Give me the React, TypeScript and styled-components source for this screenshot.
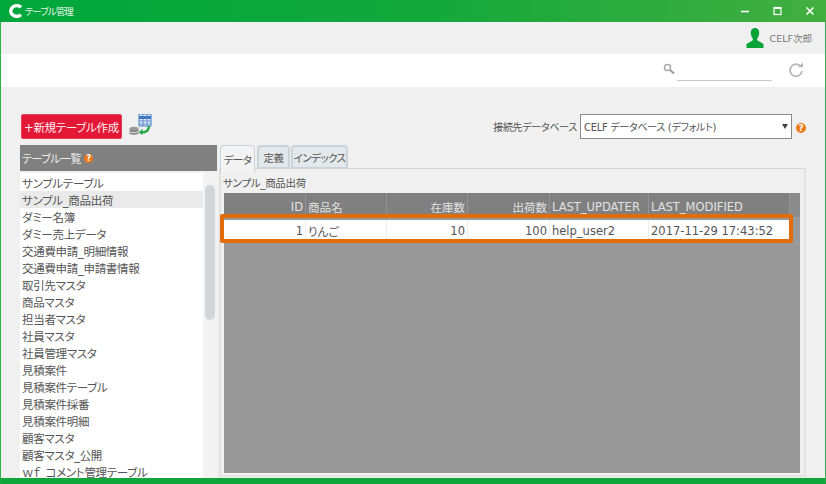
import styled, { createGlobalStyle } from "styled-components";

const GlobalStyle = createGlobalStyle`
  html, body { margin: 0; padding: 0; background: #f0f0f0; }
  body { font-family: "DejaVu Sans", "Noto Sans CJK JP", sans-serif; font-feature-settings: "palt"; }
`;

const tables = [
  "サンプルテーブル",
  "サンプル_商品出荷",
  "ダミー名簿",
  "ダミー売上データ",
  "交通費申請_明細情報",
  "交通費申請_申請書情報",
  "取引先マスタ",
  "商品マスタ",
  "担当者マスタ",
  "社員マスタ",
  "社員管理マスタ",
  "見積案件",
  "見積案件テーブル",
  "見積案件採番",
  "見積案件明細",
  "顧客マスタ",
  "顧客マスタ_公開",
  "ｗｆ_コメント管理テーブル",
];

const columns = [
  { name: "ID", width: 82, right: true, value: "1" },
  { name: "商品名", width: 81, right: false, value: "りんご" },
  { name: "在庫数", width: 81, right: true, value: "10" },
  { name: "出荷数", width: 82, right: true, value: "100" },
  { name: "LAST_UPDATER", width: 99, right: false, value: "help_user2" },
  { name: "LAST_MODIFIED", width: 141, right: false, value: "2017-11-29 17:43:52" },
];

const HelpIcon = ({ size = 10 }: { size?: number }) => (
  <HelpMark $size={size}>?</HelpMark>
);

export default function App() {
  return (
    <Window>
      <GlobalStyle />
      <TitleBar>
        <svg width="15" height="14" viewBox="0 0 15 14">
          <path d="M13 3.2 A6 5.4 0 1 0 13 10.8" fill="none" stroke="#fff" strokeWidth="3.4" />
        </svg>
        <TitleText>テーブル管理</TitleText>
        <WindowButtons>
          <svg width="12" height="12" viewBox="0 0 12 12">
            <path d="M1 6.5H9" stroke="#fff" strokeWidth="1.6" />
          </svg>
          <svg width="12" height="12" viewBox="0 0 12 12">
            <rect x="2" y="2.5" width="7" height="7" fill="none" stroke="#fff" strokeWidth="1.2" />
            <path d="M2 3H9" stroke="#fff" strokeWidth="2" />
          </svg>
          <svg width="12" height="12" viewBox="0 0 12 12">
            <path d="M2.5 2.5 9.5 9.5M9.5 2.5 2.5 9.5" stroke="#fff" strokeWidth="1.6" />
          </svg>
        </WindowButtons>
      </TitleBar>

      <Body>
        <UserBar>
          <svg width="18" height="20" viewBox="0 0 18 20">
            <path
              d="M9 0C6 0 4.600 2.300 4.800 5.200 5 8 6 9.500 6.800 10.500V12.300L.5 16V20H17.500V16L11.200 12.300V10.500C12 9.500 13 8 13.200 5.200 13.400 2.300 12 0 9 0Z"
              fill="#0aa33a"
            />
          </svg>
          <UserName>CELF次郎</UserName>
        </UserBar>

        <SearchBar>
          <svg width="12" height="12" viewBox="0 0 12 12">
            <circle cx="4.500" cy="4.500" r="3" fill="none" stroke="#aaa" strokeWidth="1.500" />
            <path d="M7 7 11 10.500" stroke="#999" strokeWidth="2" />
          </svg>
          <SearchInput />
          <svg width="16" height="16" viewBox="0 0 16 16">
            <path d="M12.800 4.500A6 6 0 1 0 14 9" fill="none" stroke="#b5b5b5" strokeWidth="1.700" />
            <path d="M10 5.200H15V.5Z" fill="#b5b5b5" />
          </svg>
        </SearchBar>

        <Workspace>
          <ActionRow>
            <CreateButton>+新規テーブル作成</CreateButton>
            <svg width="24" height="22" viewBox="0 0 24 22">
              <rect x="10" y="0" width="12" height="12" fill="#dfe9f7" stroke="#4a7fc4" />
              <path d="M10 3.500H22" stroke="#3d78c6" strokeWidth="3" />
              <path d="M14 0V12M18 0V12M10 7H22M10 10H22" stroke="#4a7fc4" strokeWidth=".8" />
              <ellipse cx="5" cy="15" rx="4.500" ry="2.200" fill="#9a9a9a" />
              <path d="M.5 15V19.500C.5 21 9.500 21 9.500 19.500V15C9.500 17 .5 17 .5 15Z" fill="#7f7f7f" />
              <path d="M.5 17.500C1.500 19 8.500 19 9.500 17.500" stroke="#eee" fill="none" />
              <path d="M20 12C20 17 17 18.500 12 18.500" fill="none" stroke="#27a844" strokeWidth="2.400" />
              <path d="M13.500 14.500 9.500 18.500 13.500 21Z" fill="#27a844" />
            </svg>
            <ConnectionLabel>接続先データベース</ConnectionLabel>
            <DbSelect>
              <span>CELF データベース (デフォルト)</span>
              <SelectArrow />
            </DbSelect>
            <HelpIcon />
          </ActionRow>

          <Panels>
            <ListColumn>
              <ListHeader>
                テーブル一覧
                <HelpIcon size={9} />
              </ListHeader>
              <ListFrame>
                <TableList>
                  {tables.map((name, i) => (
                    <TableItem key={name} $selected={i === 1}>
                      {name}
                    </TableItem>
                  ))}
                </TableList>
                <ScrollTrack>
                  <ScrollThumb />
                </ScrollTrack>
              </ListFrame>
            </ListColumn>

            <DetailColumn>
              <Tabs>
                <Tab $active $width={35}>データ</Tab>
                <Tab $width={33}>定義</Tab>
                <Tab $width={57}>インデックス</Tab>
              </Tabs>
              <TabPanel>
                <TableTitle>サンプル_商品出荷</TableTitle>
                <GridArea>
                  <GridHeader>
                    {columns.map((c) => (
                      <HeaderCell key={c.name} $width={c.width} $right={c.right}>
                        {c.name}
                      </HeaderCell>
                    ))}
                    <HeaderFiller />
                  </GridHeader>
                  <GridRow>
                    {columns.map((c) => (
                      <RowCell key={c.name} $width={c.width} $right={c.right}>
                        {c.value}
                      </RowCell>
                    ))}
                  </GridRow>
                  <Highlight />
                </GridArea>
              </TabPanel>
            </DetailColumn>
          </Panels>
        </Workspace>
      </Body>
    </Window>
  );
}

const Window = styled.div`
  width: 826px;
  height: 484px;
  display: flex;
  flex-direction: column;
  overflow: hidden;
  background: #f0f0f0;
  color: #555;
  font-size: 11.5px;
`;
const TitleBar = styled.div`
  height: 22px;
  flex: none;
  display: flex;
  align-items: center;
  padding: 0 0 0 8px;
  background: linear-gradient(90deg, #00a73c 0%, #12a83c 50%, #43ae40 100%);
  box-sizing: border-box;
`;
const TitleText = styled.span`
  margin-left: 2px;
  color: #e6f5e6;
  font-size: 9.5px;
  letter-spacing: -1px;
`;
const WindowButtons = styled.div`
  margin-left: auto;
  width: 85px;
  display: flex;
  gap: 20px;
  margin-right: 1px;
  svg { flex: none; }
`;
const Body = styled.div`
  flex: 1;
  display: flex;
  flex-direction: column;
  min-height: 0;
  border-left: 1px solid #2bb24c;
  border-right: 1px solid #2bb24c;
  border-bottom: 6px solid #0fa63c;
`;
const UserBar = styled.div`
  height: 32px;
  flex: none;
  display: flex;
  align-items: center;
  justify-content: flex-end;
  gap: 6px;
  padding-right: 13px;
  background: #f0f0f0;
  box-sizing: border-box;
`;
const UserName = styled.span`
  font-size: 9.5px;
  color: #777;
`;
const SearchBar = styled.div`
  height: 33px;
  flex: none;
  display: flex;
  align-items: center;
  justify-content: flex-end;
  padding-right: 21px;
  background: #fff;
  box-sizing: border-box;
  svg:last-child { margin-left: 16px; margin-top: -2px; }
  svg:first-child { margin-right: 0; margin-top: -4px; }
`;
const SearchInput = styled.div`
  width: 95px;
  height: 19px;
  margin-left: 2px;
  border-bottom: 1px solid #c8c8c8;
`;
const Workspace = styled.div`
  flex: 1;
  min-height: 0;
  display: flex;
  flex-direction: column;
  padding: 27px 19px 0 19px;
  background: #f0f0f0;
`;
const ActionRow = styled.div`
  height: 25px;
  flex: none;
  display: flex;
  align-items: center;
  margin-left: 1px;
  svg { margin-left: 7px; margin-top: -3px; }
  > span:last-child { margin-top: 3px; }
`;
const CreateButton = styled.button`
  width: 101px;
  height: 25px;
  padding: 0;
  border: 1px solid #e5405a;
  border-radius: 2px;
  background: #e31837;
  color: #fdeef0;
  font: inherit;
  font-size: 11.5px;
  letter-spacing: -0.3px;
  white-space: nowrap;
`;
const ConnectionLabel = styled.span`
  margin-left: auto;
  font-size: 10px;
  letter-spacing: -0.3px;
  margin-right: 3px;
  color: #555;
`;
const DbSelect = styled.div`
  width: 212px;
  height: 25px;
  margin-right: 1px;
  padding-left: 3px;
  display: flex;
  align-items: center;
  justify-content: space-between;
  box-sizing: border-box;
  border: 1px solid #8a8a8a;
  background: #fff;
  font-size: 10px;
  letter-spacing: -0.3px;
  color: #555;
`;
const SelectArrow = styled.i`
  margin: 0 3px 0 0;
  border-left: 3px solid transparent;
  border-right: 3px solid transparent;
  border-top: 5px solid #444;
`;
const HelpMark = styled.span<{ $size: number }>`
  width: ${(p) => p.$size}px;
  height: ${(p) => p.$size}px;
  margin-left: 3px;
  display: inline-flex;
  align-items: center;
  justify-content: center;
  flex: none;
  border-radius: 50%;
  background: #ee7a1c;
  color: #fff;
  font-size: ${(p) => p.$size - 1}px;
  font-weight: bold;
`;
const Panels = styled.div`
  flex: 1;
  min-height: 0;
  display: flex;
  margin-top: 6px;
`;
const ListColumn = styled.div`
  width: 197px;
  flex: none;
  display: flex;
  flex-direction: column;
`;
const ListHeader = styled.div`
  height: 26px;
  flex: none;
  display: flex;
  align-items: center;
  padding-left: 2px;
  background: #808080;
  color: #eee;
  font-size: 11px;
  letter-spacing: -0.5px;
`;
const ListFrame = styled.div`
  flex: 1;
  min-height: 0;
  margin-top: 2px;
  display: flex;
  overflow: hidden;
  background: #fff;
`;
const TableList = styled.div`
  width: 183px;
  flex: none;
  padding-top: 1px;
`;
const TableItem = styled.div<{ $selected?: boolean }>`
  height: 17px;
  line-height: 21px;
  padding-left: 2px;
  white-space: nowrap;
  font-size: 11.5px;
  letter-spacing: -0.3px;
  background: ${(p) => (p.$selected ? "#eaeaea" : "transparent")};
  color: #555;
`;
const ScrollTrack = styled.div`
  width: 14px;
  flex: none;
  background: #f3f3f3;
  padding: 12px 2px 0;
  box-sizing: border-box;
`;
const ScrollThumb = styled.div`
  height: 135px;
  border-radius: 5px;
  background: #d3d6d9;
`;
const DetailColumn = styled.div`
  flex: 1;
  min-width: 0;
  display: flex;
  flex-direction: column;
  margin-left: 2px;
`;
const Tabs = styled.div`
  height: 23px;
  flex: none;
  display: flex;
  align-items: flex-start;
  gap: 1px;
  padding-left: 1px;
`;
const Tab = styled.div<{ $active?: boolean; $width: number }>`
  width: ${(p) => p.$width}px;
  height: ${(p) => (p.$active ? 27 : 23)}px;
  margin-right: ${(p) => (p.$active ? 1 : 0)}px;
  display: flex;
  align-items: center;
  justify-content: center;
  position: relative;
  z-index: ${(p) => (p.$active ? 1 : 0)};
  box-sizing: border-box;
  border: ${(p) => (p.$active ? "1px" : "2px")} solid #c9d3d8;
  border-bottom: ${(p) => (p.$active ? "none" : "1px solid #c9d3d8")};
  border-radius: 4px 4px 0 0;
  background: ${(p) => (p.$active ? "#f3f3f3" : "#e2e8eb")};
  font-size: 10.5px;
  letter-spacing: -0.6px;
  color: #555;
`;
const TabPanel = styled.div`
  flex: 1;
  min-height: 0;
  display: flex;
  flex-direction: column;
  width: 587px;
  margin-bottom: 1px;
  padding: 0 4px 2px 3px;
  box-sizing: border-box;
  border-top: 1px solid #d4d4d4;
  border-left: 2px solid #e0e0e0;
  border-right: 2px solid #e4e4e4;
  border-bottom: 2px solid #e4e4e4;
`;
const TableTitle = styled.div`
  height: 24px;
  flex: none;
  padding-top: 3px;
  box-sizing: border-box;
  margin-left: -1px;
  display: flex;
  align-items: center;
  font-size: 10.5px;
  letter-spacing: -0.3px;
  color: #555;
`;
const GridArea = styled.div`
  flex: 1;
  position: relative;
  background: #999;
`;
const GridHeader = styled.div`
  height: 24px;
  display: flex;
  background: #808080;
  color: #e2e2e2;
`;
const HeaderCell = styled.div<{ $width: number; $right: boolean }>`
  width: ${(p) => p.$width}px;
  flex: none;
  padding: 4px 2px 0;
  box-sizing: border-box;
  display: flex;
  align-items: center;
  justify-content: ${(p) => (p.$right ? "flex-end" : "flex-start")};
  border-right: 1px solid #939393;
  font-size: 11.5px;
  white-space: nowrap;
`;
const HeaderFiller = styled.div`
  flex: 1;
  background: #8c8c8c;
`;
const GridRow = styled.div`
  width: 566px;
  height: 21px;
  margin-top: 3px;
  display: flex;
  background: #fff;
  border-bottom: 2px solid #c8c8c8;
`;
const RowCell = styled.div<{ $width: number; $right: boolean }>`
  width: ${(p) => p.$width}px;
  flex: none;
  padding: 0 2px;
  box-sizing: border-box;
  display: flex;
  align-items: center;
  justify-content: ${(p) => (p.$right ? "flex-end" : "flex-start")};
  border-right: 1px solid #eee;
  font-size: 11.5px;
  color: #555;
  white-space: nowrap;
`;
const Highlight = styled.div`
  position: absolute;
  left: -4px;
  top: 21px;
  width: 573px;
  height: 29px;
  box-sizing: border-box;
  border: 4px solid #e36c0a;
  border-radius: 2px;
`;
